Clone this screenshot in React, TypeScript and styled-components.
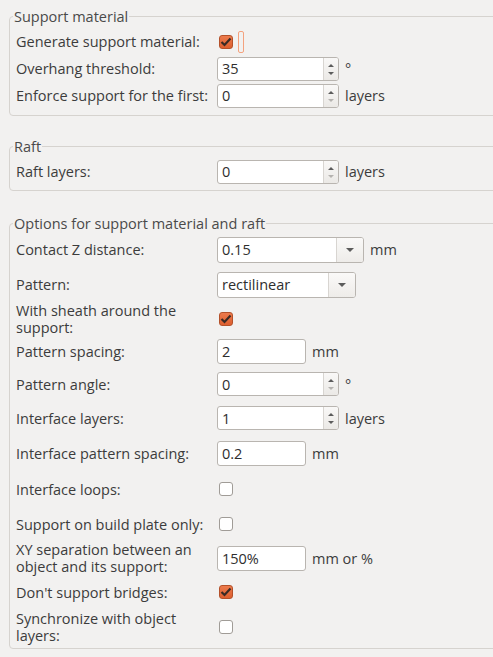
import React from "react";
import styled, { createGlobalStyle } from "styled-components";

const GlobalStyle = createGlobalStyle`
  html, body {
    margin: 0;
    padding: 0;
    background: #f2f1f0;
    overflow: hidden;
  }
  body {
    font-family: "Open Sans", "DejaVu Sans", sans-serif;
    font-size: 14.5px;
    color: #3c3c3c;
  }
`;

const Page = styled.div`
  width: 493px;
  height: 657px;
  padding: 8px 0 0 9px;
  box-sizing: border-box;
  overflow: hidden;
`;

const Group = styled.fieldset<{ $padTop: number; $padBottom: number; $gap: number }>`
  margin: 0 0 ${(p) => p.$gap}px 0;
  width: 520px;
  box-sizing: border-box;
  border: 1px solid #d6d3cf;
  border-radius: 4px;
  padding: ${(p) => p.$padTop}px 0 ${(p) => p.$padBottom}px 6px;
  min-width: 0;
`;

const Title = styled.legend`
  margin-left: -3px;
  padding: 0 1px;
  line-height: 17px;
  color: #4a4a4a;
`;

const Row = styled.div<{ $h: number }>`
  display: grid;
  grid-template-columns: 201px auto auto;
  justify-content: start;
  align-items: center;
  height: ${(p) => p.$h}px;
`;

const Label = styled.div`
  width: 200px;
  line-height: 17px;
`;

const Unit = styled.span`
  margin-left: 6px;
`;

const Box = styled.div<{ $w: number; $h: number }>`
  display: flex;
  width: ${(p) => p.$w}px;
  height: ${(p) => p.$h}px;
  box-sizing: border-box;
  border: 1px solid #b9b5b0;
  border-radius: 3px;
  background: #ffffff;
  overflow: hidden;
`;

const Value = styled.div`
  flex: 1;
  display: flex;
  align-items: center;
  padding-left: 4px;
  color: #2e2e2e;
`;

const SpinButtons = styled.div`
  width: 15px;
  display: flex;
  flex-direction: column;
  align-items: center;
  justify-content: space-between;
  padding: 6px 0 5px;
  box-sizing: border-box;
  border-left: 1px solid #d8d5d1;
  background: linear-gradient(#f9f8f7, #ebe9e6);
`;

const ComboButton = styled.div`
  width: 26px;
  display: flex;
  align-items: center;
  justify-content: center;
  border-left: 1px solid #d8d5d1;
  background: linear-gradient(#faf9f8, #eeece9);
`;

const Arrow = styled.span<{ $dir: "up" | "down"; $dim?: boolean; $size: number }>`
  width: 0;
  height: 0;
  border-left: ${(p) => p.$size}px solid transparent;
  border-right: ${(p) => p.$size}px solid transparent;
  ${(p) =>
    p.$dir === "up"
      ? `border-bottom: ${p.$size}px solid ${p.$dim ? "#b5b3b0" : "#5c5c5c"};`
      : `border-top: ${p.$size}px solid ${p.$dim ? "#b5b3b0" : "#5c5c5c"};`}
`;

const Check = styled.div<{ $on?: boolean }>`
  margin-left: 2px;
  width: 14px;
  height: 14px;
  box-sizing: border-box;
  border-radius: 3px;
  border: 1px solid ${(p) => (p.$on ? "#b4512a" : "#a09c97")};
  background: ${(p) => (p.$on ? "linear-gradient(#ec7a4c, #dd5f2f)" : "#ffffff")};
  display: flex;
  align-items: center;
  justify-content: center;
`;

const CheckCell = styled.div`
  display: flex;
  align-items: center;
`;

const FocusRing = styled.div`
  margin-left: 5px;
  width: 4px;
  height: 20px;
  border: 1px solid #f4a27e;
  border-radius: 2px;
`;

const Spin = ({ value, min }: { value: string; min?: boolean }) => (
  <Box $w={122} $h={24}>
    <Value>{value}</Value>
    <SpinButtons>
      <Arrow $dir="up" $size={3} />
      <Arrow $dir="down" $size={3} $dim={min} />
    </SpinButtons>
  </Box>
);

const Combo = ({ value, w }: { value: string; w: number }) => (
  <Box $w={w} $h={26}>
    <Value>{value}</Value>
    <ComboButton>
      <Arrow $dir="down" $size={4} />
    </ComboButton>
  </Box>
);

const Text = ({ value }: { value: string }) => (
  <Box $w={89} $h={25}>
    <Value>{value}</Value>
  </Box>
);

const CheckBox = ({ on }: { on?: boolean }) => (
  <Check $on={on}>
    {on && (
      <svg width="12" height="10" viewBox="0 0 12 10">
        <path d="M1.5 5 L4.5 8 L10.5 1.5" fill="none" stroke="#3a2a24" strokeWidth="2.2" />
      </svg>
    )}
  </Check>
);

export default function App() {
  return (
    <Page>
      <GlobalStyle />
      <Group $padTop={3} $padBottom={6} $gap={22}>
        <Title>Support material</Title>
        <Row $h={27}>
          <Label>Generate support material:</Label>
          <CheckCell>
            <CheckBox on />
            <FocusRing />
          </CheckCell>
        </Row>
        <Row $h={27}>
          <Label>Overhang threshold:</Label>
          <Spin value="35" />
          <Unit>°</Unit>
        </Row>
        <Row $h={27}>
          <Label>Enforce support for the first:</Label>
          <Spin value="0" min />
          <Unit>layers</Unit>
        </Row>
      </Group>

      <Group $padTop={3} $padBottom={5} $gap={24}>
        <Title>Raft</Title>
        <Row $h={27}>
          <Label>Raft layers:</Label>
          <Spin value="0" min />
          <Unit>layers</Unit>
        </Row>
      </Group>

      <Group $padTop={0} $padBottom={4} $gap={0}>
        <Title>Options for support material and raft</Title>
        <Row $h={35}>
          <Label>Contact Z distance:</Label>
          <Combo value="0.15" w={147} />
          <Unit>mm</Unit>
        </Row>
        <Row $h={35}>
          <Label>Pattern:</Label>
          <Combo value="rectilinear" w={139} />
        </Row>
        <Row $h={33}>
          <Label>With sheath around the support:</Label>
          <CheckBox on />
        </Row>
        <Row $h={32}>
          <Label>Pattern spacing:</Label>
          <Text value="2" />
          <Unit>mm</Unit>
        </Row>
        <Row $h={34}>
          <Label>Pattern angle:</Label>
          <Spin value="0" min />
          <Unit>°</Unit>
        </Row>
        <Row $h={34}>
          <Label>Interface layers:</Label>
          <Spin value="1" />
          <Unit>layers</Unit>
        </Row>
        <Row $h={36}>
          <Label>Interface pattern spacing:</Label>
          <Text value="0.2" />
          <Unit>mm</Unit>
        </Row>
        <Row $h={36}>
          <Label>Interface loops:</Label>
          <CheckBox />
        </Row>
        <Row $h={34}>
          <Label>Support on build plate only:</Label>
          <CheckBox />
        </Row>
        <Row $h={34}>
          <Label>XY separation between an object and its support:</Label>
          <Text value="150%" />
          <Unit>mm or %</Unit>
        </Row>
        <Row $h={34}>
          <Label>Don't support bridges:</Label>
          <CheckBox on />
        </Row>
        <Row $h={35}>
          <Label>Synchronize with object layers:</Label>
          <CheckBox />
        </Row>
      </Group>
    </Page>
  );
}
